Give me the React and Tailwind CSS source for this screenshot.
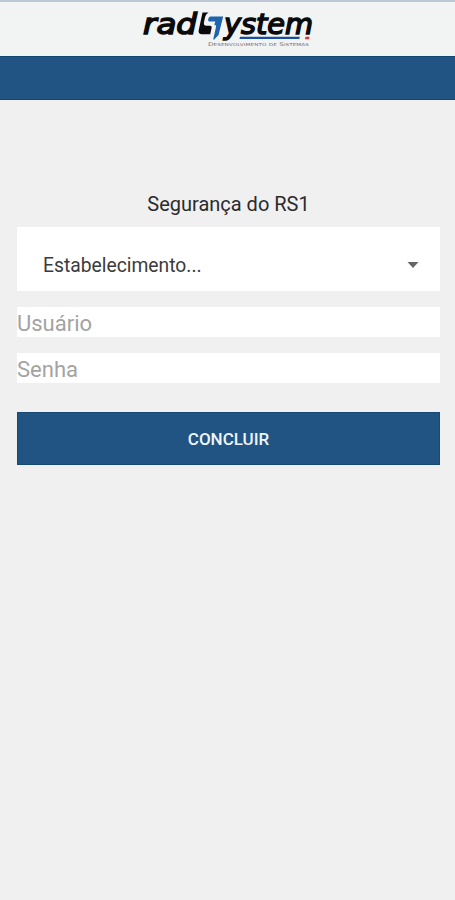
import { useState } from 'react';

const FIELDS = [
  { name: 'usuario', label: 'Usuário', type: 'text' },
  { name: 'senha', label: 'Senha', type: 'password' },
];

const Logo = () => (
  <svg width="176" height="50" viewBox="140 2 176 50" role="img" aria-label="radSystem" className="block overflow-visible">
    <g
      fill="#0b0b0d"
      stroke="#0b0b0d"
      strokeWidth="1.500"
      fontFamily="'DejaVu Sans', sans-serif"
      fontStyle="italic"
      fontSize="28"
    >
      <text x="143" y="33.500" textLength="54" lengthAdjust="spacingAndGlyphs">rad</text>
      <text x="224" y="33.500" textLength="89" lengthAdjust="spacingAndGlyphs">ystem</text>
    </g>

    {/* S mark */}
    <path d="M202.500 12.500h6q-2.800 1.500-3.400 4.500l-1.200 5.500q-.4 3.300 2.600 3.300h3.500q2 0 1.700 1.700l-1.500 6.800h-8.200q-4 0-3.300-4z" fill="#0b0b0d" />
    <path d="M210.500 16.500h12.700l-4.700 18.500-4.300 4.500h-1l2.800-12.500q.4-2.300-1.700-2.300l1-3.200h-5.800q-1.700 0-1.400-1.700l.5-1.800q.4-1.500 1.900-1.500z" fill="#1f65ad" />

    <path d="M240 36.800h59.800l-.5 2.200h-59.800z" fill="#194f9c" />
    <path d="M305.500 36.800h4l-.5 2.400h-4z" fill="#d5343c" />
    <text
      x="208"
      y="45.500"
      fill="#74757b"
      fontFamily="'DejaVu Sans', sans-serif"
      fontSize="5"
      style={{ fontVariant: 'small-caps' }}
      textLength="101"
      lengthAdjust="spacingAndGlyphs"
    >
      Desenvolvimento de Sistemas
    </text>
  </svg>
);

const App = () => {
  const [values, setValues] = useState({ usuario: '', senha: '' });

  const handleChange = (e) => {
    setValues({ ...values, [e.target.name]: e.target.value });
  };

  return (
    <div className="min-h-screen bg-[#f0f0f0] font-[Roboto,sans-serif]">

      {/* Header */}
      <header>
        <div className="h-14 border-t-2 border-[#bfc9d5] bg-[#f2f3f3] flex justify-center">
          <Logo />
        </div>
        <div className="h-11 bg-[#215483] border-y border-[#124674]" />
      </header>

      {/* Login form */}
      <form className="pt-[90px] pl-[17px] pr-[15px]" onSubmit={e => e.preventDefault()}>
        <h1 className="h-[37px] pt-px text-center text-[20px] leading-[26px] text-[#2b2b2b]">Segurança do RS1</h1>

        <button type="button" className="w-full h-16 pl-[26px] pr-[21px] pt-3 bg-white flex items-center justify-between text-[19.3px] text-[#3b3b3b]">
          <span className="pt-0.5">Estabelecimento...</span>
          <svg width="12" height="6" viewBox="0 0 12 6" className="fill-[#666]">
            <path d="M.5 0h11L6 6z" />
          </svg>
        </button>

        <div className="mt-4 space-y-4">
          {FIELDS.map(field => (
            <input
              key={field.name}
              name={field.name}
              type={field.type}
              placeholder={field.label}
              aria-label={field.label}
              value={values[field.name]}
              onChange={handleChange}
              className="block w-full h-[30px] pt-0.5 bg-white text-[22px] text-[#3b3b3b] placeholder:text-[#a3a3a3] focus:outline-none"
            />
          ))}
        </div>

        <button type="submit" className="mt-[29px] w-full h-[53px] pt-0.5 bg-[#215483] border border-[#174975] text-[17px] font-medium text-[#eef5fa]">
          CONCLUIR
        </button>
      </form>
    </div>
  );
};

export default App;
